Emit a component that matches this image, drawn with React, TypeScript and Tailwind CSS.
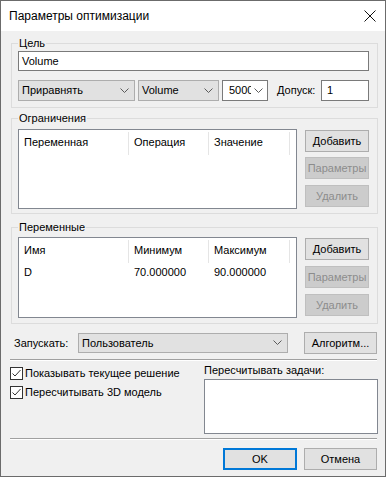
import React from "react";

function Chevron() {
  return (
    <svg width="9" height="6" viewBox="0 0 9 6" className="shrink-0">
      <path d="M0.5 0.5 L4.5 4.5 L8.5 0.5" fill="none" stroke="#5a5a5a" strokeWidth="1" />
    </svg>
  );
}

function Check() {
  return (
    <div className="w-[13px] h-[13px] border border-[#333333] bg-white flex items-center justify-center shrink-0">
      <svg width="11" height="11" viewBox="0 0 11 11">
        <path d="M1.5 5.5 L4 8 L9.5 2" fill="none" stroke="#333333" strokeWidth="1" />
      </svg>
    </div>
  );
}

function Btn({ label, disabled, className = "" }: { label: string; disabled?: boolean; className?: string }) {
  return (
    <div
      className={
        "h-[22px] flex items-center justify-center border " +
        (disabled ? "bg-[#cccccc] border-[#bfbfbf] text-[#8c8c8c] " : "bg-[#e1e1e1] border-[#adadad] text-black ") +
        className
      }
    >
      {label}
    </div>
  );
}

function Group({ title, className = "", children }: { title: string; className?: string; children: React.ReactNode }) {
  return (
    <div className={"border border-[#dcdcdc] " + className}>
      <div className="-mt-[7px] ml-[6px] px-[1px] w-fit h-[13px] leading-[13px] bg-[#f0f0f0]">{title}</div>
      {children}
    </div>
  );
}

function ListView({ cols, rows, className = "" }: { cols: string[]; rows: string[][]; className?: string }) {
  const widths = ["w-[109px]", "w-[79px]", "w-[80px]"];
  return (
    <div className={"w-[279px] border border-[#828790] bg-white " + className}>
      <div className="flex h-[25px]">
        {cols.map((c, i) => (
          <React.Fragment key={c}>
            <div className={widths[i] + " pl-[5px] flex items-center"}>{c}</div>
            <div className="w-[1px] mt-[2px] h-[23px] bg-[#e5e5e5]" />
          </React.Fragment>
        ))}
      </div>
      {rows.map((r, ri) => (
        <div key={ri} className="flex h-[18px] items-center">
          {r.map((v, i) => (
            <div key={i} className={widths[i] + " pl-[5px] mr-[1px]"}>
              {v}
            </div>
          ))}
        </div>
      ))}
    </div>
  );
}

export default function App() {
  return (
    <div className="w-[386px] h-[477px] border border-[#6b6b6b] bg-[#f0f0f0] flex flex-col text-[11px] text-black font-['Liberation_Sans',Arial,sans-serif] leading-[13px] overflow-hidden">
      {/* Title bar */}
      <div className="h-[30px] bg-white flex items-center justify-between pl-[8px] pr-[8px] shrink-0">
        <span className="text-[12px]">Параметры оптимизации</span>
        <svg width="12" height="12" viewBox="0 0 12 12" className="mr-[1px]">
          <path d="M0.5 0.5 L11.5 11.5 M11.5 0.5 L0.5 11.5" stroke="#111" strokeWidth="1" fill="none" />
        </svg>
      </div>

      <div className="flex flex-col pl-[10px] pr-[7px]">
        {/* Цель */}
        <Group title="Цель" className="mt-[12px]">
          <div className="pl-[6px] pr-[8px] pb-[6px]">
            <div className="mt-[1px] h-[20px] border border-[#7a7a7a] bg-white px-[3px] flex items-center">Volume</div>
            <div className="mt-[9px] flex items-center h-[21px]">
              <div className="w-[117px] h-[21px] bg-[#e1e1e1] border border-[#adadad] flex items-center justify-between pl-[3px] pr-[5px]">
                <span>Приравнять</span>
                <Chevron />
              </div>
              <div className="ml-[3px] w-[81px] h-[21px] bg-[#e1e1e1] border border-[#adadad] flex items-center justify-between pl-[3px] pr-[5px]">
                <span>Volume</span>
                <Chevron />
              </div>
              <div className="ml-[3px] w-[46px] h-[21px] bg-white border border-[#7a7a7a] flex items-center justify-between pl-[6px] pr-[4px]">
                <span className="w-[22px] overflow-hidden whitespace-nowrap">5000</span>
                <Chevron />
              </div>
              <div className="ml-[9px] flex-1">Допуск:</div>
              <div className="w-[48px] h-[21px] bg-white border border-[#7a7a7a] flex items-center pl-[5px]">1</div>
            </div>
          </div>
        </Group>

        {/* Ограничения */}
        <Group title="Ограничения" className="mt-[10px]">
          <div className="flex items-start pl-[6px] pr-[8px] pb-[4px]">
            <ListView cols={["Переменная", "Операция", "Значение"]} rows={[]} className="mt-[4px] h-[80px]" />
            <div className="ml-[8px] w-[64px] mt-[5px] flex flex-col">
              <Btn label="Добавить" />
              <Btn label="Параметры" disabled className="mt-[5px]" />
              <Btn label="Удалить" disabled className="mt-[6px]" />
            </div>
          </div>
        </Group>

        {/* Переменные */}
        <Group title="Переменные" className="mt-[13px]">
          <div className="flex items-start pl-[6px] pr-[8px] pb-[5px]">
            <ListView
              cols={["Имя", "Минимум", "Максимум"]}
              rows={[["D", "70.000000", "90.000000"]]}
              className="mt-[3px] h-[81px]"
            />
            <div className="ml-[8px] w-[64px] mt-[4px] flex flex-col">
              <Btn label="Добавить" />
              <Btn label="Параметры" disabled className="mt-[6px]" />
              <Btn label="Удалить" disabled className="mt-[6px]" />
            </div>
          </div>
        </Group>

        {/* Запускать */}
        <div className="mt-[8px] flex items-center h-[22px]">
          <div className="ml-[3px] w-[64px]">Запускать:</div>
          <div className="w-[210px] h-[20px] bg-[#e1e1e1] border border-[#adadad] flex items-center justify-between pl-[3px] pr-[5px]">
            <span>Пользователь</span>
            <Chevron />
          </div>
          <Btn label="Алгоритм..." className="ml-auto mr-[1px] w-[73px]" />
        </div>

        <div className="mt-[5px] -ml-[1px] mr-[1px] border-t border-t-[#a0a0a0] border-b border-b-white" />

        {/* Checkboxes + tasks */}
        <div className="mt-[3px] flex items-start">
          <div className="-ml-[1px] pt-[3px] flex flex-col">
            <div className="flex items-center h-[13px]">
              <Check />
              <span className="ml-[2px]">Показывать текущее решение</span>
            </div>
            <div className="flex items-center h-[13px] mt-[6px]">
              <Check />
              <span className="ml-[2px]">Пересчитывать 3D модель</span>
            </div>
          </div>
          <div className="ml-auto w-[174px] flex flex-col">
            <div className="h-[13px]">Пересчитывать задачи:</div>
            <div className="mt-[2px] h-[55px] bg-white border border-[#828790]" />
          </div>
        </div>

        <div className="mt-[4px] -ml-[1px] mr-[1px] border-t border-t-[#a0a0a0] border-b border-b-white" />

        <div className="mt-[8px] flex justify-end mr-[1px]">
          <div className="w-[74px] h-[22px] bg-[#e1e1e1] border-2 border-[#0078d7] flex items-center justify-center">OK</div>
          <Btn label="Отмена" className="ml-[7px] w-[73px]" />
        </div>
      </div>
    </div>
  );
}
